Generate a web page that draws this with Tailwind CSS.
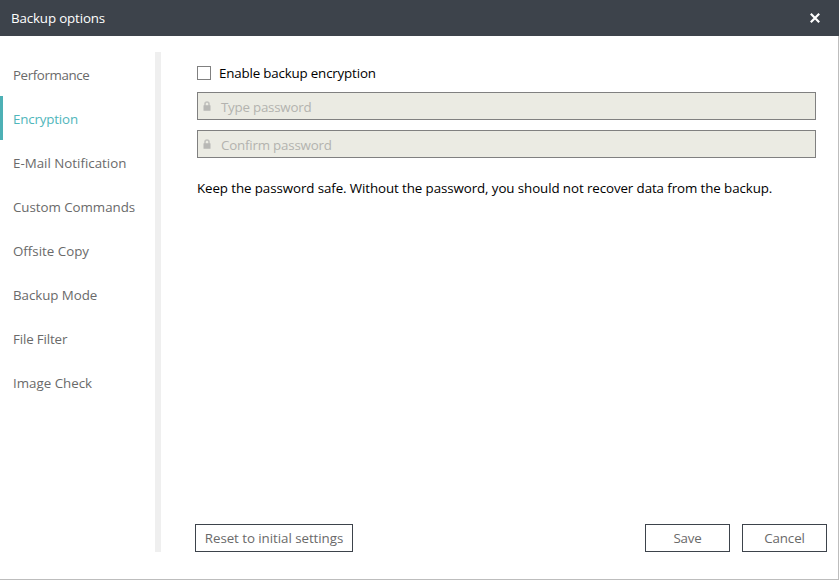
<!DOCTYPE html>
<html lang="en">
<head>
<meta charset="utf-8">
<title>Backup options</title>
<script src="https://cdn.jsdelivr.net/npm/@tailwindcss/browser@4"></script>
</head>
<body class="h-[580px] w-[839px] overflow-hidden bg-white font-['Open_Sans','Noto_Sans',sans-serif] text-[13.33px] leading-5 text-[#6a6a6a]">
<div class="flex h-full flex-col">
  <header class="flex h-9 shrink-0 items-center justify-between bg-[#3d434b] pr-[19px] pl-[11px] text-white">
    <h1 class="tracking-[-0.14px]">Backup options</h1>
    <button aria-label="Close"><svg class="block size-[10px]" viewBox="0 0 10 10" fill="none" stroke="white" stroke-width="2.2"><path d="M.8.8 9.2 9.2M9.2.8.8 9.2"/></svg></button>
  </header>
  <div class="flex min-h-0 flex-1 border-r border-b border-[#bdbdbd]">
    <nav class="mt-4 h-[500px] w-[161px] shrink-0 border-r-6 border-[#efefef]">
      <a class="flex h-11 items-center pt-px pl-[13px] tracking-[-0.4px]">Performance</a>
      <a class="flex h-11 items-center border-l-3 border-[#4db0b5] pt-px pl-[10px] tracking-[-0.16px] text-[#4fb6bb]">Encryption</a>
      <a class="flex h-11 items-center pt-px pl-[13px]">E-Mail Notification</a>
      <a class="flex h-11 items-center pt-px pl-[13px] tracking-[-0.04px]">Custom Commands</a>
      <a class="flex h-11 items-center pt-px pl-[13px]">Offsite Copy</a>
      <a class="flex h-11 items-center pt-px pl-[13px] tracking-[-0.06px]">Backup Mode</a>
      <a class="flex h-11 items-center pt-px pl-[13px] tracking-[-0.15px]">File Filter</a>
      <a class="flex h-11 items-center pt-px pl-[13px]">Image Check</a>
    </nav>
    <main class="flex flex-1 flex-col pt-[27px] pr-[11px] pb-[27px] pl-[34px]">
      <div class="flex flex-col pr-[11px] pl-[2px] text-black">
        <label class="flex h-5 items-center gap-2 tracking-[-0.17px]"><span class="size-[14px] border border-[#808080] bg-white"></span><span>Enable backup encryption</span></label>
        <div class="mt-[9px] flex h-7 items-center border border-[#808080] bg-[#ebebe3] pt-[2px] pl-[5px] tracking-[-0.23px] text-[#b3b3af]">
          <svg class="mr-[10px] mb-[2px] h-[10px] w-[8px]" viewBox="0 0 8 10"><path d="M2 5V3a2 2 0 0 1 4 0V5" fill="none" stroke="#c2c2be" stroke-width="1.6"/><rect x=".5" y="4.2" width="7" height="5.6" rx=".4" fill="#b8b8b5"/></svg>Type password</div>
        <div class="mt-[10px] flex h-7 items-center border border-[#808080] bg-[#ebebe3] pt-[2px] pl-[5px] tracking-[-0.2px] text-[#b3b3af]">
          <svg class="mr-[10px] mb-[2px] h-[10px] w-[8px]" viewBox="0 0 8 10"><path d="M2 5V3a2 2 0 0 1 4 0V5" fill="none" stroke="#c2c2be" stroke-width="1.6"/><rect x=".5" y="4.2" width="7" height="5.6" rx=".4" fill="#b8b8b5"/></svg>Confirm password</div>
        <p class="mt-5 tracking-[-0.09px] whitespace-nowrap">Keep the password safe. Without the password, you should not recover data from the backup.</p>
      </div>
      <footer class="mt-auto flex h-7">
        <button class="w-[158px] border border-[#3d434b] tracking-[-0.05px]">Reset to initial settings</button>
        <button class="ml-auto w-[85px] border border-[#3d434b] tracking-[-0.2px]">Save</button>
        <button class="ml-3 w-[85px] border border-[#3d434b] tracking-[-0.1px]">Cancel</button>
      </footer>
    </main>
  </div>
</div>
</body>
</html>
